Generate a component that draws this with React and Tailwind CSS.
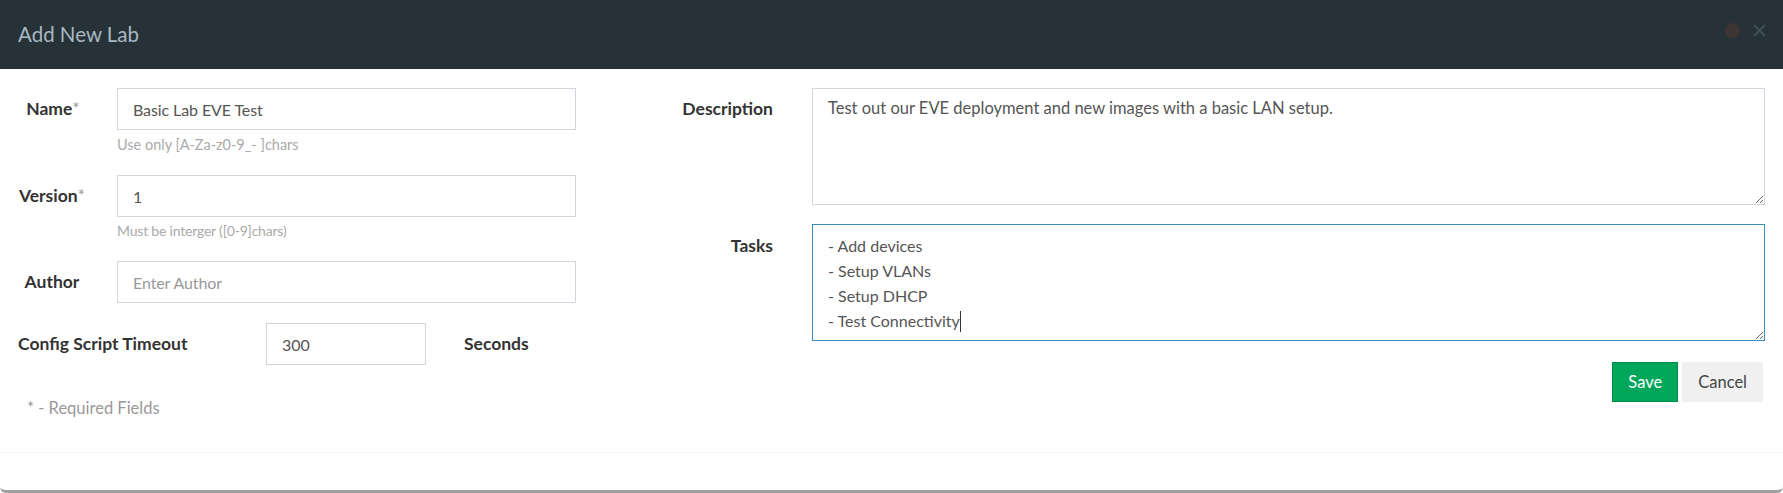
import React from 'react';

const tasksText = '- Add devices\n- Setup VLANs\n- Setup DHCP\n- Test Connectivity';

const inputCls = 'w-full h-[42px] border border-[#d2d6de] px-[15px] text-[16px] tracking-[-0.1px] text-[#555] outline-none';

const Field = ({ label, required, labelClass, children }) => (
    <div className="flex items-center">
        <label className={`w-[68px] text-center font-bold text-[#333] whitespace-nowrap ${labelClass || ''}`}>
            {label}
            {required && <span className="font-normal text-[#999]">*</span>}
        </label>
        <div className="ml-[31px] w-[459px]">{children}</div>
    </div>
);

const App = () => {
    return (
        <div className="w-full h-[493px] bg-white flex flex-col font-['Lato',sans-serif] text-[17.5px] border-b-[3px] border-[#a0a0a0] rounded-b-[6px] overflow-hidden">
            {/* Header */}
            <div className="h-[69px] shrink-0 bg-[#263238] flex items-center justify-between pl-[18px] pr-[17px]">
                <h4 className="text-[20.5px] text-[#a9b8c2] leading-none">Add New Lab</h4>
                <div className="flex items-center gap-[13px] -mt-[8px]">
                    <span className="w-[15px] h-[15px] rounded-full bg-[#3d3434]" />
                    <svg width="13" height="13" viewBox="0 0 13 13" className="text-[#415058]">
                        <path d="M1 1 L12 12 M12 1 L1 12" stroke="currentColor" strokeWidth="1.8" />
                    </svg>
                </div>
            </div>

            {/* Body */}
            <div className="h-[383px] shrink-0 flex pl-[18px] pr-[18px] pt-[19px]">
                {/* Left column */}
                <div className="w-[558px] shrink-0 flex flex-col">
                    <Field label="Name" required labelClass="pl-[2px]">
                        <input className={inputCls} defaultValue="Basic Lab EVE Test" />
                    </Field>
                    <div className="ml-[99px] mt-[4px] text-[14.5px] leading-[21px] text-[#aaa]">Use only [A-Za-z0-9_- ]chars</div>

                    <div className="mt-[20px]">
                        <Field label="Version" required>
                            <input className={inputCls} defaultValue="1" />
                        </Field>
                    </div>
                    <div className="ml-[99px] mt-[3px] text-[14px] tracking-[-0.2px] leading-[21px] text-[#aaa]">Must be interger ([0-9]chars)</div>

                    <div className="mt-[20px]">
                        <Field label="Author">
                            <input className={`${inputCls} placeholder:text-[#999]`} placeholder="Enter Author" />
                        </Field>
                    </div>

                    <div className="mt-[20px] flex items-center">
                        <label className="w-[248px] font-bold text-[#333] whitespace-nowrap">Config Script Timeout</label>
                        <input
                            className="w-[160px] h-[42px] border border-[#d2d6de] px-[15px] text-[16px] text-[#555] outline-none"
                            defaultValue="300"
                        />
                        <span className="ml-[38px] font-bold text-[#333]">Seconds</span>
                    </div>

                    <div className="mt-[31px] pl-[9px] leading-[25px] text-[16.5px] text-[#999]">* - Required Fields</div>
                </div>

                {/* Right column */}
                <div className="flex-1 flex flex-col">
                    <div className="flex items-start">
                        <label className="w-[197px] shrink-0 text-right font-bold text-[#333] leading-[25px] pt-[8px]">Description</label>
                        <textarea
                            className="ml-[39px] flex-1 h-[117px] border border-[#d2d6de] px-[15px] py-[7px] text-[16.5px] leading-[25px] text-[#555] outline-none"
                            defaultValue="Test out our EVE deployment and new images with a basic LAN setup."
                        />
                    </div>
                    <div className="mt-[19px] flex items-start">
                        <label className="w-[197px] shrink-0 text-right font-bold text-[#333] leading-[25px] pt-[9px]">Tasks</label>
                        <div className="ml-[39px] flex-1 relative">
                            <textarea
                                className="block w-full h-[117px] border border-[#3c8dbc] px-[15px] py-[8px] text-[16px] leading-[25px] text-[#555] outline-none"
                                defaultValue={tasksText}
                            />
                            {/* text caret */}
                            <span className="absolute left-[148px] top-[87px] w-px h-[21px] bg-[#333]" />
                        </div>
                    </div>
                    <div className="mt-[21px] flex justify-end gap-[4px] pr-[2px]">
                        <button className="h-[40px] px-[15px] bg-[#00a65a] border border-[#008d4c] text-[16.5px] text-white">Save</button>
                        <button className="h-[40px] px-[15px] bg-[#f0f0f0] border border-[#f0f0f0] text-[16.5px] text-[#444]">Cancel</button>
                    </div>
                </div>
            </div>

            {/* Footer */}
            <div className="flex-1 border-t border-[#f4f4f4]" />
        </div>
    );
};

export default App;
